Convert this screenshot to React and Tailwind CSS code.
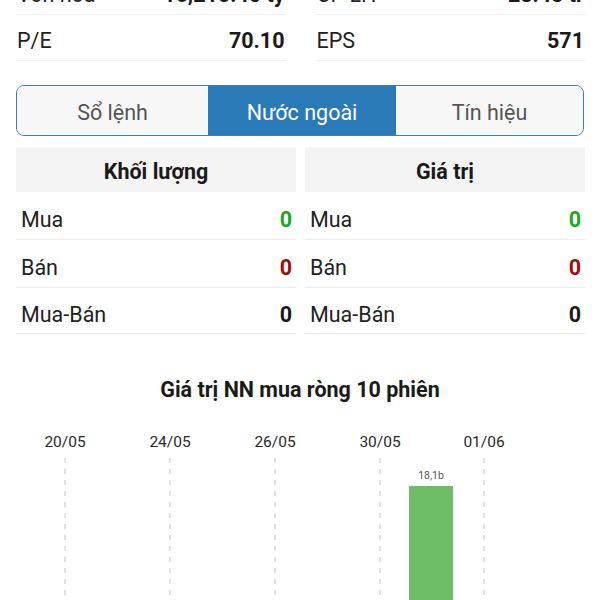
import React from 'react';

const stats = [
  [
    { label: 'Vốn hóa', value: '16,215.40 tỷ' },
    { label: 'CP LH', value: '28.43 tr' },
  ],
  [
    { label: 'P/E', value: '70.10' },
    { label: 'EPS', value: '571' },
  ],
];

const tabs = ['Sổ lệnh', 'Nước ngoài', 'Tín hiệu'];

const flowRows = [
  { label: 'Mua', value: '0', color: 'text-[#1fa51f]' },
  { label: 'Bán', value: '0', color: 'text-[#a00d0d]' },
  { label: 'Mua-Bán', value: '0', color: 'text-[#1a1a1a]' },
];

const dates = [
  { label: '20/05', x: 65 },
  { label: '24/05', x: 170 },
  { label: '26/05', x: 275 },
  { label: '30/05', x: 380 },
  { label: '01/06', x: 484 },
];

const StatRow = ({ item }) => (
  <div className="flex h-[46px] items-center justify-between border-b border-[#ececec] pl-[1px] pr-[1px] pt-[8px]">
    <span className="text-[21.5px] text-[#222]">{item.label}</span>
    <span className="text-[21.5px] font-bold text-[#1a1a1a]">{item.value}</span>
  </div>
);

const FlowTable = ({ title }) => (
  <div className="flex flex-col">
    <div className="flex h-[45px] items-center justify-center bg-[#f4f4f4] pt-[5px]">
      <span className="text-[21.5px] font-bold text-[#1a1a1a]">{title}</span>
    </div>
    {flowRows.map((row, i) => (
      <div
        key={row.label}
        className={`flex items-center justify-between border-b border-[#ececec] pl-[5px] pr-[4px] pt-[10px] ${i === 2 ? 'h-[46px]' : 'h-[48px]'}`}
      >
        <span className="text-[21.5px] text-[#222]">{row.label}</span>
        <span className={`text-[21.5px] font-bold ${row.color}`}>{row.value}</span>
      </div>
    ))}
  </div>
);

const Chart = () => (
  <svg width="600" height="180" viewBox="0 0 600 180" className="block">
    {dates.map((d) => (
      <g key={d.label}>
        <text
          x={d.x}
          y="26"
          textAnchor="middle"
          fontSize="15.5"
          fill="#2a2a2a"
          fontFamily="Roboto, sans-serif"
        >
          {d.label}
        </text>
        <line
          x1={d.x}
          y1="37"
          x2={d.x}
          y2="180"
          stroke="#c4c4c4"
          strokeWidth="1"
          strokeDasharray="5 6"
        />
      </g>
    ))}
    <rect x="409" y="65" width="44" height="120" fill="#6cbd66" />
    <text
      x="431"
      y="58"
      textAnchor="middle"
      fontSize="10.5"
      fill="#555"
      fontFamily="Roboto, sans-serif"
    >
      18,1b
    </text>
  </svg>
);

const App = () => {
  return (
    <div className="h-[600px] w-[600px] overflow-hidden bg-white font-['Roboto',sans-serif]">
      <div className="mt-[-31px] grid grid-cols-2 gap-x-[30px] pl-4 pr-[15px]">
        {stats.map((pair) =>
          pair.map((item) => <StatRow key={item.label} item={item} />)
        )}
      </div>

      <div className="mx-4 mt-6 grid h-[51px] grid-cols-[191px_188px_1fr] overflow-hidden rounded-lg border-[1.5px] border-[#3f7fae]">
        {tabs.map((tab, i) => (
          <div
            key={tab}
            className={`flex items-center justify-center pt-[5px] text-[21.5px] ${
              i === 1 ? 'bg-[#2a7ab8] text-white' : 'bg-[#f7f7f7] text-[#555]'
            }`}
          >
            {tab}
          </div>
        ))}
      </div>

      <div className="mt-[11px] grid grid-cols-2 gap-x-[9px] pl-4 pr-[15px]">
        <FlowTable title="Khối lượng" />
        <FlowTable title="Giá trị" />
      </div>

      <div className="mt-[40px] text-center text-[21.5px] font-bold text-[#1a1a1a]">
        Giá trị NN mua ròng 10 phiên
      </div>

      <div className="mt-[15px]">
        <Chart />
      </div>
    </div>
  );
};

export default App;
